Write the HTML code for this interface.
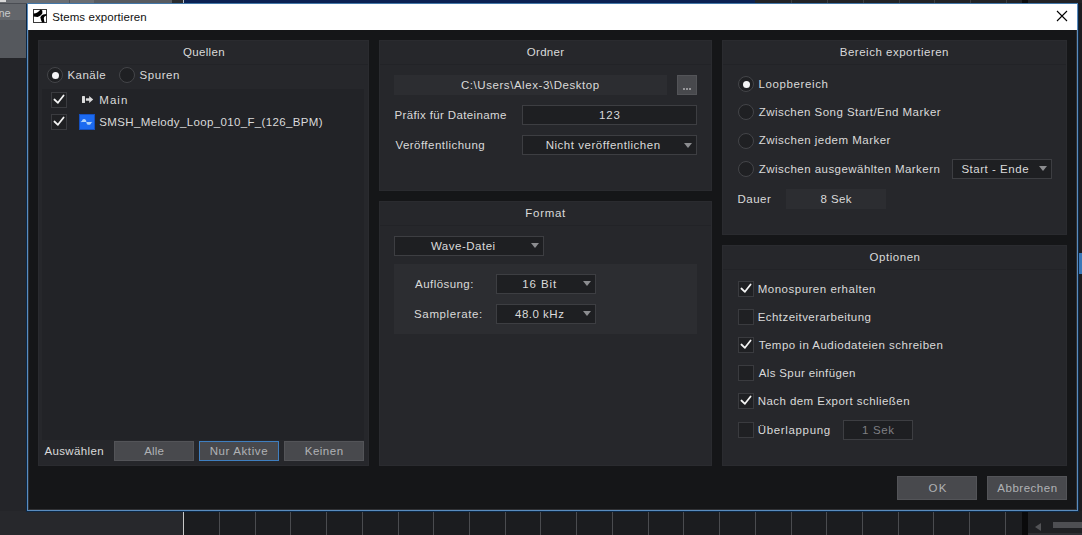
<!DOCTYPE html>
<html><head><meta charset="utf-8">
<style>
*{margin:0;padding:0;box-sizing:border-box}
html,body{width:1082px;height:535px;overflow:hidden;background:#242529;position:relative;font-family:"Liberation Sans",sans-serif;font-size:12px}
.a{position:absolute}
.t{position:absolute;white-space:nowrap;line-height:20px;font-size:12px}
.panel{position:absolute;background:#26272b;border:1px solid #2a2b2f}
.hdr{position:absolute;left:0;right:0;top:0;height:24px;border-bottom:1px solid #222327}
.cb{position:absolute;width:16px;height:16px;border:1px solid #3a3b3f;background:#1f2023}
.rd{position:absolute;width:16px;height:16px;border:1px solid #444549;border-radius:50%;background:#1f2023}
.rd.on::after{content:"";position:absolute;left:3.5px;top:3.5px;width:7px;height:7px;border-radius:50%;background:#f4f4f6}
.dd{position:absolute;height:20px;border:1px solid #3d3e42;background:#1e1f22}
.arr{position:absolute;width:0;height:0;border-left:4px solid transparent;border-right:4px solid transparent;border-top:5px solid #8c8d90}
.btn{position:absolute;background:#48494d;border:1px solid #535458}
</style></head><body>

<!-- background app -->
<div class="a" style="left:0;top:0;width:183px;height:3px;background:#6a6d72"></div>
<div class="a" style="left:0;top:3px;width:27px;height:1px;background:#4a4d53"></div>
<div class="a" style="left:0;top:0;width:6px;height:2px;background:#d8d8d8"></div>
<div class="a" style="left:69px;top:0;width:1px;height:3px;background:#505357"></div>
<div class="a" style="left:94px;top:0;width:78px;height:3px;background:#585b60"></div>
<div class="a" style="left:172px;top:0;width:11px;height:3px;background:#2a2b2e"></div>
<div class="a" style="left:183px;top:0;width:572px;height:3px;background:#0b2152"></div>
<div class="a" style="left:183px;top:0;width:1px;height:3px;background:#b8bcc4"></div>
<div class="a" style="left:755px;top:0;width:327px;height:3px;background:#222326"></div>
<div class="a" style="left:0;top:4px;width:27px;height:16px;background:#63666b"></div>
<div class="a" style="left:0;top:20px;width:27px;height:38px;background:#55585d"></div>
<div class="a" style="left:-1.5px;top:2.5px;white-space:nowrap;line-height:20px;color:#c8cacc;font-size:11px">ne</div>

<div class="a" style="left:0;top:511px;width:183px;height:24px;background:#27282c"></div>
<div class="a" style="left:183px;top:511px;width:1px;height:24px;background:#c8c8c8"></div>
<div class="a" style="left:184px;top:511px;width:838px;height:24px;background:#1b1c1f"></div>
<div class="a" style="left:1022px;top:511px;width:6px;height:24px;background:#0a0a0b"></div>
<div class="a" style="left:1028px;top:511px;width:54px;height:24px;background:#1f2023"></div>
<div class="a" style="left:1035px;top:523px;width:0;height:0;border-top:4px solid transparent;border-bottom:4px solid transparent;border-right:6px solid #525356"></div>
<div class="a" style="left:1053px;top:522px;width:29px;height:6px;background:#4e4f53"></div>
<div class="a" style="left:1078px;top:3px;width:4px;height:508px;background:#1c1d20"></div>
<div class="a" style="left:1078px;top:253px;width:4px;height:21px;background:#3a78b8"></div>
<div class="a" style="left:219px;top:511px;width:1px;height:24px;background:#4a4b4f"></div>
<div class="a" style="left:255px;top:511px;width:1px;height:24px;background:#4a4b4f"></div>
<div class="a" style="left:290px;top:511px;width:1px;height:24px;background:#4a4b4f"></div>
<div class="a" style="left:326px;top:511px;width:1px;height:24px;background:#4a4b4f"></div>
<div class="a" style="left:362px;top:511px;width:1px;height:24px;background:#4a4b4f"></div>
<div class="a" style="left:398px;top:511px;width:1px;height:24px;background:#4a4b4f"></div>
<div class="a" style="left:433px;top:511px;width:1px;height:24px;background:#4a4b4f"></div>
<div class="a" style="left:469px;top:511px;width:1px;height:24px;background:#4a4b4f"></div>
<div class="a" style="left:505px;top:511px;width:1px;height:24px;background:#4a4b4f"></div>
<div class="a" style="left:540px;top:511px;width:1px;height:24px;background:#4a4b4f"></div>
<div class="a" style="left:576px;top:511px;width:1px;height:24px;background:#4a4b4f"></div>
<div class="a" style="left:612px;top:511px;width:1px;height:24px;background:#4a4b4f"></div>
<div class="a" style="left:648px;top:511px;width:1px;height:24px;background:#4a4b4f"></div>
<div class="a" style="left:683px;top:511px;width:1px;height:24px;background:#4a4b4f"></div>
<div class="a" style="left:719px;top:511px;width:1px;height:24px;background:#4a4b4f"></div>
<div class="a" style="left:755px;top:511px;width:1px;height:24px;background:#4a4b4f"></div>
<div class="a" style="left:791px;top:511px;width:1px;height:24px;background:#4a4b4f"></div>
<div class="a" style="left:826px;top:511px;width:1px;height:24px;background:#4a4b4f"></div>
<div class="a" style="left:862px;top:511px;width:1px;height:24px;background:#4a4b4f"></div>
<div class="a" style="left:898px;top:511px;width:1px;height:24px;background:#4a4b4f"></div>
<div class="a" style="left:933px;top:511px;width:1px;height:24px;background:#4a4b4f"></div>
<div class="a" style="left:969px;top:511px;width:1px;height:24px;background:#4a4b4f"></div>
<div class="a" style="left:1005px;top:511px;width:1px;height:24px;background:#4a4b4f"></div>
<div class="a" style="left:791px;top:0;width:1px;height:3px;background:#3c3d40"></div>
<div class="a" style="left:827px;top:0;width:1px;height:3px;background:#3c3d40"></div>
<div class="a" style="left:863px;top:0;width:1px;height:3px;background:#3c3d40"></div>
<div class="a" style="left:899px;top:0;width:1px;height:3px;background:#3c3d40"></div>
<div class="a" style="left:934px;top:0;width:1px;height:3px;background:#3c3d40"></div>
<div class="a" style="left:970px;top:0;width:1px;height:3px;background:#3c3d40"></div>
<div class="a" style="left:1006px;top:0;width:1px;height:3px;background:#3c3d40"></div>
<div class="a" style="left:1022px;top:0;width:6px;height:3px;background:#0a0a0b"></div>
<div class="a" style="left:1028px;top:533px;width:54px;height:2px;background:#2e2f33"></div>

<!-- dialog -->
<div class="a" style="left:26px;top:4px;width:1053px;height:508px;border:1px solid #0c2744;border-top:none"></div>
<div class="a" style="left:27px;top:3px;width:1051px;height:508px;border:1px solid #5a8cbe;border-top-color:#4277a8;background:#151618"></div>
<div class="a" style="left:28px;top:30px;width:1049px;height:480px;border-left:1px solid #303134;border-right:1px solid #303134;border-bottom:1px solid #303134"></div>
<div class="a" style="left:28px;top:4px;width:1049px;height:26px;background:#ffffff"></div>
<svg class="a" style="left:33px;top:9px" width="14" height="14" viewBox="0 0 14 14">
<rect x="0.5" y="0.5" width="13" height="13" fill="#fff" stroke="#3a3a3a" stroke-width="1"/>
<path d="M0.5 4.4 C3 4.5 5.2 3.4 7.6 0.5 L9.3 1.6 L9.4 4.2 C8.2 5.9 7 7.2 4.6 7.9 L0.5 7.5 Z" fill="#000"/>
<path d="M7.3 8.3 C8 7 9 5.8 10.2 5.4 L13.5 5 L13.5 6.5 C12 6.9 11 7.8 10.8 9.3 C10.8 10.8 11.2 12 11.6 13.5 L9.1 13.5 C8.3 12 7.6 10.2 7.3 8.3 Z" fill="#000"/>
</svg>
<svg class="a" style="left:1056px;top:10px" width="12" height="12" viewBox="0 0 12 12"><path d="M1 1 L11 11 M11 1 L1 11" stroke="#000" stroke-width="1.1"/></svg>

<!-- Panels -->
<div class="panel" style="left:38px;top:40px;width:331px;height:426px"><div class="hdr"></div>
  <div class="a" style="left:3px;top:48px;width:322px;height:351px;background:#222327"></div>
</div>
<div class="panel" style="left:379px;top:40px;width:333px;height:151px"><div class="hdr"></div></div>
<div class="panel" style="left:379px;top:201px;width:333px;height:265px"><div class="hdr"></div></div>
<div class="panel" style="left:722px;top:40px;width:345px;height:195px"><div class="hdr"></div></div>
<div class="panel" style="left:722px;top:245px;width:345px;height:221px"><div class="hdr"></div></div>

<!-- Quellen widgets -->
<div class="rd on" style="left:47px;top:67px"></div>
<div class="rd" style="left:119px;top:67px"></div>
<div class="cb" style="left:51px;top:92px"></div>
<div class="cb" style="left:51px;top:114px"></div>
<div class="a" style="left:79px;top:114px;width:16px;height:16px;background:#1c6af0;border:1px solid #1450c0"></div>
<div class="btn" style="left:114px;top:441px;width:80px;height:20px"></div>
<div class="btn" style="left:199px;top:441px;width:80px;height:20px;border:1px solid #3f7fc0"></div>
<div class="btn" style="left:284px;top:441px;width:80px;height:20px"></div>

<!-- Ordner widgets -->
<div class="a" style="left:394px;top:75px;width:273px;height:20px;background:#2c2d31"></div>
<div class="btn" style="left:677px;top:75px;width:20px;height:20px"></div>
<div class="dd" style="left:522px;top:105px;width:175px"></div>
<div class="dd" style="left:522px;top:135px;width:175px"></div>
<div class="arr" style="left:684px;top:143px"></div>

<!-- Format widgets -->
<div class="dd" style="left:394px;top:236px;width:150px"></div>
<div class="arr" style="left:531px;top:243px"></div>
<div class="a" style="left:394px;top:264px;width:303px;height:70px;background:#2c2d31"></div>
<div class="dd" style="left:496px;top:274px;width:100px"></div>
<div class="arr" style="left:583px;top:281px"></div>
<div class="dd" style="left:496px;top:304px;width:100px"></div>
<div class="arr" style="left:583px;top:311px"></div>

<!-- Bereich widgets -->
<div class="rd on" style="left:738px;top:76px"></div>
<div class="rd" style="left:738px;top:104px"></div>
<div class="rd" style="left:738px;top:133px"></div>
<div class="rd" style="left:738px;top:161px"></div>
<div class="dd" style="left:952px;top:159px;width:100px"></div>
<div class="arr" style="left:1039px;top:166px"></div>
<div class="a" style="left:786px;top:189px;width:100px;height:20px;background:#2c2d31"></div>

<!-- Optionen widgets -->
<div class="cb" style="left:738px;top:281px"></div>
<div class="cb" style="left:738px;top:309px"></div>
<div class="cb" style="left:738px;top:337px"></div>
<div class="cb" style="left:738px;top:365px"></div>
<div class="cb" style="left:738px;top:393px"></div>
<div class="cb" style="left:738px;top:422px"></div>
<div class="dd" style="left:843px;top:420px;width:70px"></div>

<!-- bottom buttons -->
<div class="btn" style="left:897px;top:476px;width:80px;height:24px"></div>
<div class="btn" style="left:987px;top:476px;width:80px;height:24px"></div>

<!-- icons -->
<svg class="a" style="left:51px;top:92px" width="16" height="16" viewBox="0 0 16 16"><path d="M3.4 7.5 L6.9 10.8 L12.6 3.5" fill="none" stroke="#f4f4f4" stroke-width="1.75" stroke-linecap="round" stroke-linejoin="round"/></svg>
<svg class="a" style="left:51px;top:114px" width="16" height="16" viewBox="0 0 16 16"><path d="M3.4 7.5 L6.9 10.8 L12.6 3.5" fill="none" stroke="#f4f4f4" stroke-width="1.75" stroke-linecap="round" stroke-linejoin="round"/></svg>
<svg class="a" style="left:738px;top:281px" width="16" height="16" viewBox="0 0 16 16"><path d="M3.4 7.5 L6.9 10.8 L12.6 3.5" fill="none" stroke="#f4f4f4" stroke-width="1.75" stroke-linecap="round" stroke-linejoin="round"/></svg>
<svg class="a" style="left:738px;top:337px" width="16" height="16" viewBox="0 0 16 16"><path d="M3.4 7.5 L6.9 10.8 L12.6 3.5" fill="none" stroke="#f4f4f4" stroke-width="1.75" stroke-linecap="round" stroke-linejoin="round"/></svg>
<svg class="a" style="left:738px;top:393px" width="16" height="16" viewBox="0 0 16 16"><path d="M3.4 7.5 L6.9 10.8 L12.6 3.5" fill="none" stroke="#f4f4f4" stroke-width="1.75" stroke-linecap="round" stroke-linejoin="round"/></svg>
<svg class="a" style="left:80px;top:94px" width="16" height="11" viewBox="80 94 16 11"><rect x="82" y="96" width="3" height="7" rx="0.6" fill="#dcdcdc"/><path d="M85.9 98.3 H89.2 V95.9 L93.2 99.5 L89.2 103 V100.8 H85.9 Z" fill="#dcdcdc"/></svg>
<svg class="a" style="left:79px;top:114px" width="16" height="16" viewBox="0 0 16 16"><rect x="1.9" y="7.3" width="1.2" height="0.8" fill="#aed2fa"/><path d="M2.8 8.1 C2.8 6.1 3.8 5.1 5.05 5.1 C6.3 5.1 7.3 6.1 7.4 8.1 Z" fill="#aed2fa"/><path d="M7.3 7.9 C7.4 9.9 8.4 10.8 9.8 10.8 C11.1 10.8 12.3 9.9 12.4 7.9 Z" fill="#aed2fa"/><rect x="12.2" y="7.9" width="0.9" height="0.8" fill="#aed2fa"/></svg>
<div class="a" style="left:683px;top:88px;width:2px;height:2px;background:#b0b1b3;border-radius:1px"></div>
<div class="a" style="left:686px;top:88px;width:2px;height:2px;background:#b0b1b3;border-radius:1px"></div>
<div class="a" style="left:689px;top:88px;width:2px;height:2px;background:#b0b1b3;border-radius:1px"></div>

<div class="t" style="left:52.20px;top:7.00px;color:#111;font-size:11.5px;letter-spacing:0.075px">Stems exportieren</div>
<div class="t" style="left:182.90px;top:42.00px;color:#dadada;font-size:11.5px;letter-spacing:0.35px">Quellen</div>
<div class="t" style="left:526.80px;top:42.00px;color:#dadada;font-size:11.5px;letter-spacing:0.28px">Ordner</div>
<div class="t" style="left:525.30px;top:203.00px;color:#dadada;font-size:11.5px;letter-spacing:0.72px">Format</div>
<div class="t" style="left:839.80px;top:42.00px;color:#dadada;font-size:11.5px;letter-spacing:0.5px">Bereich exportieren</div>
<div class="t" style="left:869.60px;top:247.00px;color:#dadada;font-size:11.5px;letter-spacing:0.529px">Optionen</div>
<div class="t" style="left:67.40px;top:65.00px;color:#dadada;font-size:11.5px;letter-spacing:0.5px">Kanäle</div>
<div class="t" style="left:139.50px;top:65.00px;color:#dadada;font-size:11.5px;letter-spacing:0.56px">Spuren</div>
<div class="t" style="left:99.30px;top:90.00px;color:#dadada;font-size:11.5px;letter-spacing:1.033px">Main</div>
<div class="t" style="left:99.30px;top:112.00px;color:#dadada;font-size:11.5px;letter-spacing:0.358px">SMSH_Melody_Loop_010_F_(126_BPM)</div>
<div class="t" style="left:44.40px;top:441.00px;color:#dadada;font-size:11.5px;letter-spacing:0.362px">Auswählen</div>
<div class="t" style="left:144.30px;top:441.00px;color:#b0b2b5;font-size:11.5px;letter-spacing:0.133px">Alle</div>
<div class="t" style="left:209.70px;top:441.00px;color:#b0b2b5;font-size:11.5px;letter-spacing:0.611px">Nur Aktive</div>
<div class="t" style="left:304.70px;top:441.00px;color:#b0b2b5;font-size:11.5px;letter-spacing:0.52px">Keinen</div>
<div class="t" style="left:460.90px;top:75.00px;color:#dadada;font-size:11.5px;letter-spacing:0.564px">C:\Users\Alex-3\Desktop</div>
<div class="t" style="left:394.40px;top:105.00px;color:#dadada;font-size:11.5px;letter-spacing:0.379px">Präfix für Dateiname</div>
<div class="t" style="left:598.90px;top:105.00px;color:#dadada;font-size:11.5px;letter-spacing:0.85px">123</div>
<div class="t" style="left:395.40px;top:135.00px;color:#dadada;font-size:11.5px;letter-spacing:0.467px">Veröffentlichung</div>
<div class="t" style="left:545.70px;top:135.00px;color:#dadada;font-size:11.5px;letter-spacing:0.52px">Nicht veröffentlichen</div>
<div class="t" style="left:430.90px;top:236.00px;color:#dadada;font-size:11.5px;letter-spacing:0.511px">Wave-Datei</div>
<div class="t" style="left:415.10px;top:274.00px;color:#dadada;font-size:11.5px;letter-spacing:0.433px">Auflösung:</div>
<div class="t" style="left:522.30px;top:274.00px;color:#dadada;font-size:11.5px;letter-spacing:0.9px">16 Bit</div>
<div class="t" style="left:414.10px;top:304.00px;color:#dadada;font-size:11.5px;letter-spacing:0.61px">Samplerate:</div>
<div class="t" style="left:515.10px;top:304.00px;color:#dadada;font-size:11.5px;letter-spacing:0.486px">48.0 kHz</div>
<div class="t" style="left:758.50px;top:74.00px;color:#dadada;font-size:11.5px;letter-spacing:0.61px">Loopbereich</div>
<div class="t" style="left:758.70px;top:102.00px;color:#dadada;font-size:11.5px;letter-spacing:0.455px">Zwischen Song Start/End Marker</div>
<div class="t" style="left:758.70px;top:130.00px;color:#dadada;font-size:11.5px;letter-spacing:0.485px">Zwischen jedem Marker</div>
<div class="t" style="left:758.70px;top:159.00px;color:#dadada;font-size:11.5px;letter-spacing:0.468px">Zwischen ausgewählten Markern</div>
<div class="t" style="left:961.40px;top:159.00px;color:#dadada;font-size:11.5px;letter-spacing:0.527px">Start - Ende</div>
<div class="t" style="left:737.50px;top:189.00px;color:#dadada;font-size:11.5px;letter-spacing:0.475px">Dauer</div>
<div class="t" style="left:820.40px;top:189.00px;color:#dadada;font-size:11.5px;letter-spacing:0.45px">8 Sek</div>
<div class="t" style="left:757.70px;top:279.00px;color:#dadada;font-size:11.5px;letter-spacing:0.506px">Monospuren erhalten</div>
<div class="t" style="left:757.70px;top:307.00px;color:#dadada;font-size:11.5px;letter-spacing:0.442px">Echtzeitverarbeitung</div>
<div class="t" style="left:758.70px;top:335.00px;color:#dadada;font-size:11.5px;letter-spacing:0.49px">Tempo in Audiodateien schreiben</div>
<div class="t" style="left:758.70px;top:363.00px;color:#dadada;font-size:11.5px;letter-spacing:0.369px">Als Spur einfügen</div>
<div class="t" style="left:757.70px;top:391.00px;color:#dadada;font-size:11.5px;letter-spacing:0.442px">Nach dem Export schließen</div>
<div class="t" style="left:757.70px;top:420.00px;color:#dadada;font-size:11.5px;letter-spacing:0.66px">Überlappung</div>
<div class="t" style="left:862.00px;top:420.00px;color:#7e7f82;font-size:11.5px;letter-spacing:0.65px">1 Sek</div>
<div class="t" style="left:928.60px;top:478.00px;color:#b0b2b5;font-size:11.5px;letter-spacing:1.1px">OK</div>
<div class="t" style="left:997.30px;top:478.00px;color:#b0b2b5;font-size:11.5px;letter-spacing:0.513px">Abbrechen</div>

</body></html>
